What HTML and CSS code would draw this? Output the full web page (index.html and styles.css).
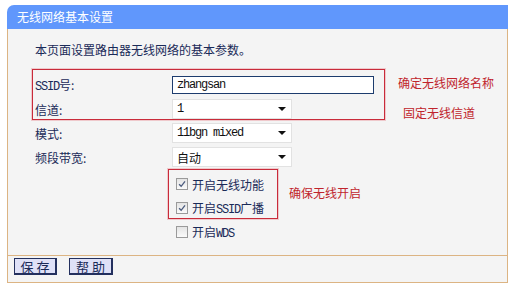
FILE: index.html
```html
<!DOCTYPE html>
<html lang="zh-CN">
<head>
<meta charset="utf-8">
<title>无线网络基本设置</title>
<link rel="stylesheet" href="styles.css">
</head>
<body>
<div class="panel">
  <div class="title">无线网络基本设置</div>
  <div class="body">
    <p class="intro">本页面设置路由器无线网络的基本参数。</p>
    <div class="form">
      <div class="label"><span><span class="lt">SSID</span>号:</span></div>
      <div class="field"><div class="input"><span class="lt">zhangsan</span></div></div>
      <div class="label"><span>信道:</span></div>
      <div class="field"><div class="select"><span class="lt">1</span><i class="arrow"></i></div></div>
      <div class="label"><span>模式:</span></div>
      <div class="field"><div class="select"><span class="lt">11bgn mixed</span><i class="arrow"></i></div></div>
      <div class="label"><span>频段带宽:</span></div>
      <div class="field"><div class="select"><span>自动</span><i class="arrow"></i></div></div>
    </div>
    <div class="checks">
      <div class="check"><span class="box checked"><svg viewBox="0 0 12 12" width="12" height="12"><path d="M2.5 6.2 L5 8.8 L9.6 2.8" fill="none" stroke="#4c5c7e" stroke-width="1.6"/></svg></span><span>开启无线功能</span></div>
      <div class="check"><span class="box checked"><svg viewBox="0 0 12 12" width="12" height="12"><path d="M2.5 6.2 L5 8.8 L9.6 2.8" fill="none" stroke="#4c5c7e" stroke-width="1.6"/></svg></span><span>开启<span class="lt">SSID</span>广播</span></div>
      <div class="check"><span class="box"></span><span>开启<span class="lt">WDS</span></span></div>
    </div>
  </div>
  <div class="footer">
    <button class="btn">保 存</button>
    <button class="btn">帮 助</button>
  </div>
  <div class="mark mark-ssid"></div>
  <div class="mark mark-check"></div>
  <div class="note note-ssid">确定无线网络名称</div>
  <div class="note note-chan">固定无线信道</div>
  <div class="note note-check">确保无线开启</div>
</div>
</body>
</html>
```

FILE: styles.css
```css
html, body {
  margin: 0;
  padding: 0;
  background: #ffffff;
}
body {
  font-family: "Noto Sans CJK SC", "Liberation Sans", sans-serif;
  font-size: 12px;
  color: #1a2a58;
}
.panel {
  position: relative;
  width: 501px;
  margin: 5px 0 0 7px;
}
.title {
  height: 24px;
  line-height: 24px;
  padding-left: 10px;
  background: #6097fc;
  color: #ffffff;
  border-top-left-radius: 7px;
}
.body {
  background: #f4f4f4;
  border-left: 1px solid #dcb483;
  border-right: 1px solid #dcb483;
  padding: 9px 0 11px 27px;
}
.intro {
  margin: 0 0 11px 0;
  height: 24px;
  line-height: 24px;
}
.lt {
  font-family: "Liberation Mono", "DejaVu Sans Mono", monospace;
  font-size: 12px;
  letter-spacing: -1.2px;
}
.form {
  display: grid;
  grid-template-columns: 137px auto;
  grid-auto-rows: 24px;
}
.label {
  display: flex;
  align-items: center;
}
.field {
  display: flex;
  align-items: center;
}
.input {
  box-sizing: border-box;
  width: 202px;
  height: 18px;
  border: 1px solid #1d3c6e;
  background: #ffffff;
  padding-left: 4px;
  display: flex;
  align-items: center;
  color: #111;
}
.select {
  box-sizing: border-box;
  width: 120px;
  height: 20px;
  border: 1px solid #e2e2e2;
  background: #ffffff;
  padding-left: 4px;
  display: flex;
  align-items: center;
  justify-content: space-between;
  color: #111;
}
.arrow {
  width: 0;
  height: 0;
  border-left: 4px solid transparent;
  border-right: 4px solid transparent;
  border-top: 4px solid #111;
  margin-right: 5px;
}
.checks {
  margin-top: 3px;
  padding-left: 141px;
}
.check {
  height: 24px;
  display: flex;
  align-items: center;
}
.box {
  box-sizing: border-box;
  width: 12px;
  height: 12px;
  border: 1px solid #9a9a9a;
  background: linear-gradient(#e4e4e4, #fafafa);
  margin-right: 4px;
  display: flex;
  align-items: center;
  justify-content: center;
}
.box svg {
  width: 10px;
  height: 10px;
}
.footer {
  background: #f4f4f4;
  border: 1px solid #dcb483;
  padding: 2px 0 7px 6px;
  display: flex;
  gap: 12px;
}
.btn {
  box-sizing: border-box;
  height: 17px;
  width: 43px;
  padding: 0;
  margin: 0;
  font-family: "Noto Sans CJK SC", sans-serif;
  font-size: 13px;
  line-height: 15px;
  color: #1a2a58;
  background: #dfe1f7;
  border: 1px solid #24305e;
  border-right-width: 2px;
  border-bottom-width: 2px;
}
.btn + .btn {
  width: 44px;
}
.mark {
  position: absolute;
  border: 1px solid #c92b3a;
  box-shadow: 0 0 0 1px rgba(230, 120, 130, 0.35);
}
.mark-ssid {
  left: 25px;
  top: 64px;
  width: 351px;
  height: 49px;
}
.mark-check {
  left: 161px;
  top: 164px;
  width: 108px;
  height: 48px;
}
.note {
  position: absolute;
  color: #c0242c;
  line-height: 16px;
  white-space: nowrap;
}
.note-ssid {
  left: 391px;
  top: 70px;
}
.note-chan {
  left: 396px;
  top: 100px;
}
.note-check {
  left: 282px;
  top: 180px;
}
```
